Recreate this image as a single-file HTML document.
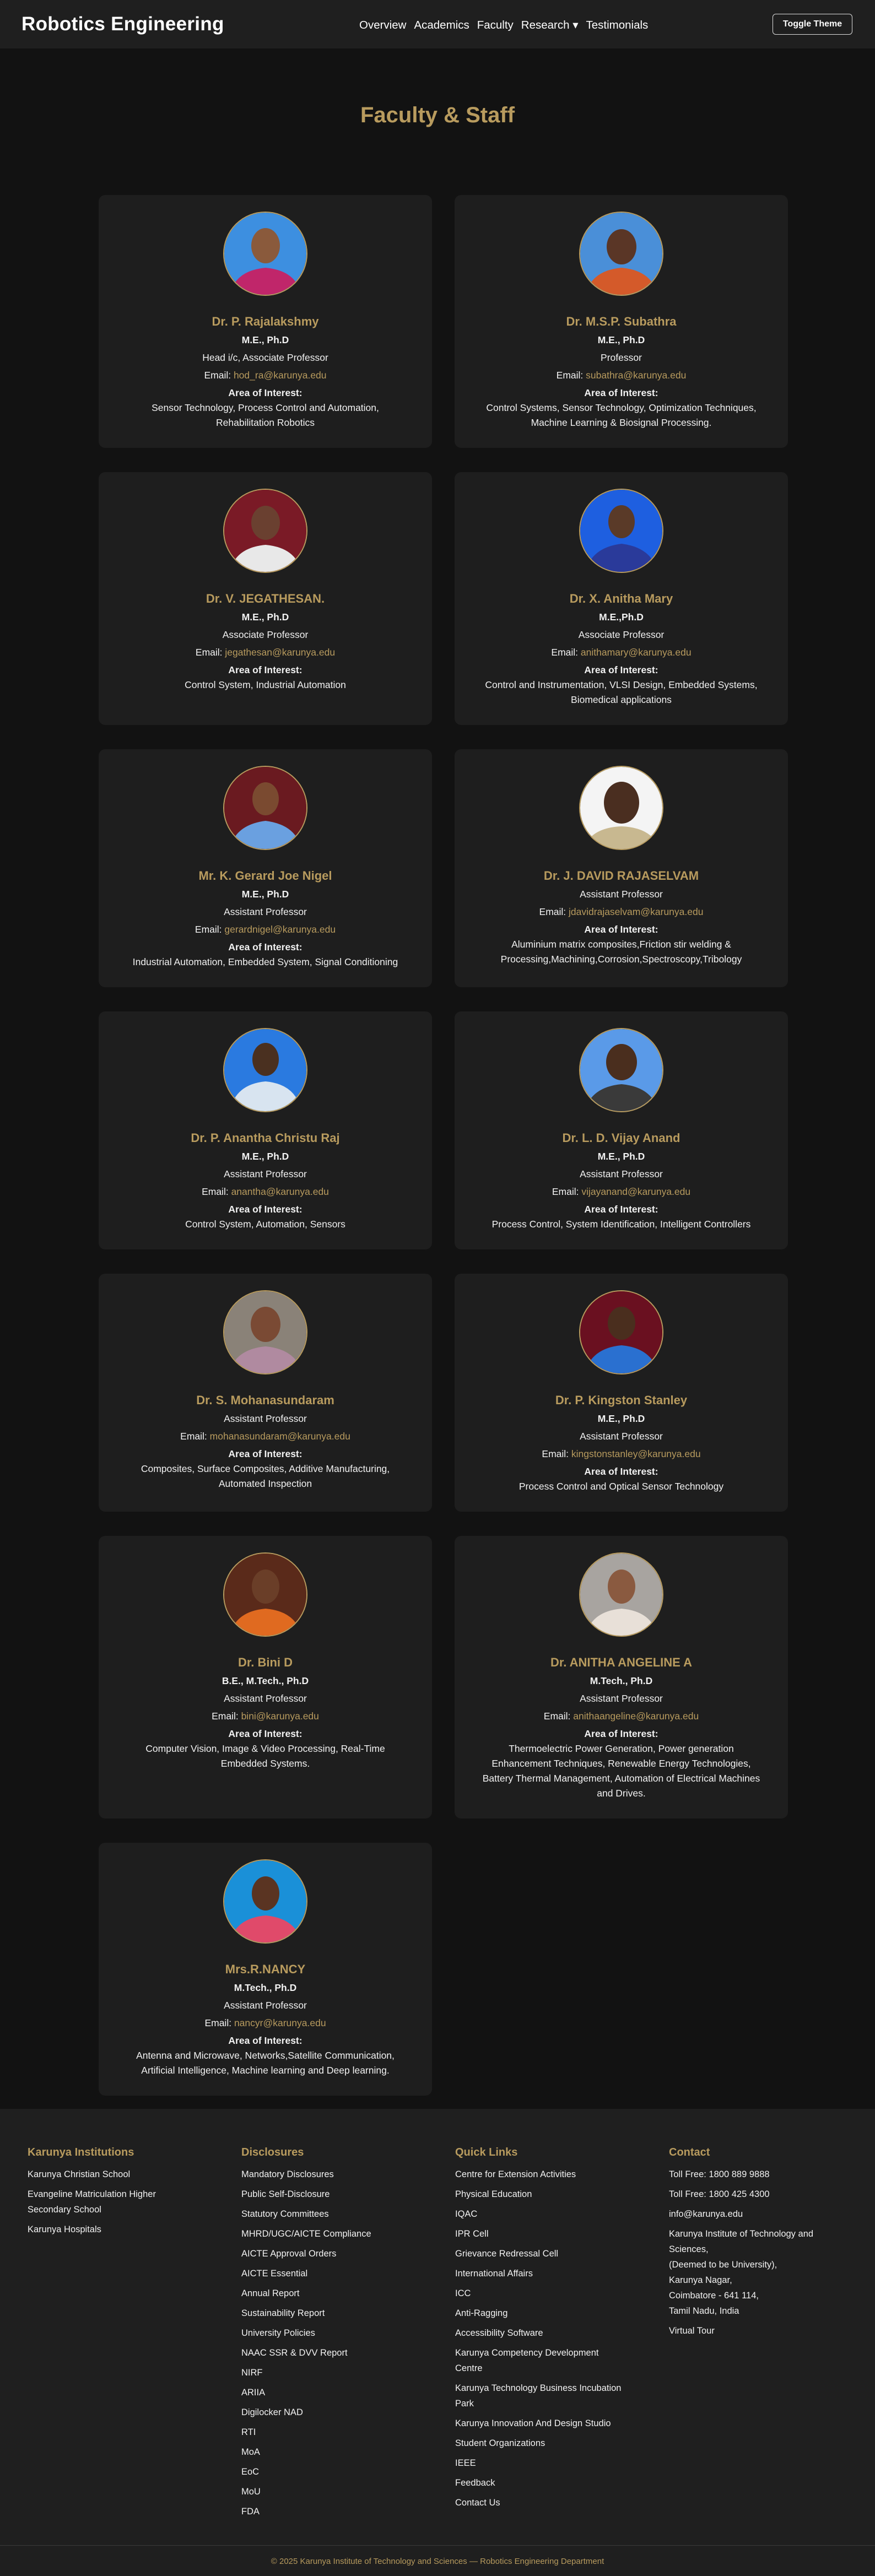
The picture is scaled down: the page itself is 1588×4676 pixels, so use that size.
<!DOCTYPE html>
<html><head><meta charset="utf-8"><style>
*{box-sizing:border-box;margin:0;padding:0}
body{width:1588px;height:4676px;background:#121212;font-family:"Liberation Sans",sans-serif;color:#f2f2f2;overflow:hidden;position:relative}
header{height:88px;background:#1f1f1f;position:relative}
.logo{position:absolute;left:39px;top:24px;font-size:35px;font-weight:bold;color:#fff;letter-spacing:0.3px}
nav{position:absolute;left:652px;top:33px;font-size:20.5px;color:#fff;white-space:nowrap}
nav span{margin-right:14px}
.tt{position:absolute;left:1402px;top:25px;width:145px;height:38px;border:1.5px solid #ddd;border-radius:6px;font-size:16px;font-weight:bold;color:#fff;text-align:center;line-height:35px}
h1{position:absolute;top:185px;left:0;width:100%;text-align:center;font-size:40px;line-height:48px;color:#b89b5e}
.grid{position:absolute;left:179px;top:354px;width:1251px;display:grid;grid-template-columns:605px 605px;column-gap:41px;row-gap:44px}
.card{background:#1e1e1e;border-radius:12px;padding:30px 14px 32px;text-align:center;font-size:17.5px}
.ph{width:153px;height:153px;border-radius:50%;border:2px solid #b89b5e;margin:0 auto;overflow:hidden}
.ph svg{display:block}
.nm{margin-top:34px;font-size:22px;font-weight:bold;line-height:26px;color:#b89b5e}
.dg{margin-top:8px;font-weight:bold;line-height:24px}
.p{margin-top:8px;line-height:24px}
.em a{color:#b89b5e;text-decoration:none}
.ai{margin-top:8px;font-weight:bold;line-height:24px}
.it{margin-top:2px;line-height:27px}
footer{position:absolute;left:0;top:3828px;width:1588px;height:848px;background:#1f1f1f}
.cols{position:absolute;top:66px;left:50px;display:flex}
.col{width:388px;padding-right:48px}
.col h3{font-size:20px;line-height:26px;color:#b89b5e;margin-bottom:13px}
.col div{font-size:16.5px;line-height:28px;margin-bottom:8px;color:#f2f2f2}
.bar{position:absolute;left:0;top:792px;width:100%;border-top:1.5px solid #3a3a3a;text-align:center;font-size:15px;color:#b89b5e;padding-top:20px}
</style></head><body>
<header>
<div class="logo">Robotics Engineering</div>
<nav><span>Overview</span><span>Academics</span><span>Faculty</span><span>Research ▾</span><span>Testimonials</span></nav>
<div class="tt">Toggle Theme</div>
</header>
<h1>Faculty &amp; Staff</h1>
<div class="grid">

<div class="card"><div class="ph"><svg width="149" height="149"><rect width="149" height="149" fill="#3d8fe0"/><ellipse cx="75" cy="60" rx="26" ry="32" fill="#8a5a3c"/><path d="M10 149 Q20 105 75 100 Q130 105 140 149Z" fill="#c0266a"/></svg></div>
<div class="nm">Dr. P. Rajalakshmy</div><div class="dg">M.E., Ph.D</div><div class="p">Head i/c, Associate Professor</div><div class="p em">Email: <a>hod_ra@karunya.edu</a></div><div class="ai">Area of Interest:</div><div class="it">Sensor Technology, Process Control and Automation,<br>Rehabilitation Robotics</div></div>

<div class="card"><div class="ph"><svg width="149" height="149"><rect width="149" height="149" fill="#4a8fd8"/><ellipse cx="75" cy="62" rx="27" ry="32" fill="#5a3626"/><path d="M10 149 Q20 105 75 100 Q130 105 140 149Z" fill="#d45a2a"/></svg></div>
<div class="nm">Dr. M.S.P. Subathra</div><div class="dg">M.E., Ph.D</div><div class="p">Professor</div><div class="p em">Email: <a>subathra@karunya.edu</a></div><div class="ai">Area of Interest:</div><div class="it">Control Systems, Sensor Technology, Optimization Techniques,<br>Machine Learning &amp; Biosignal Processing.</div></div>

<div class="card"><div class="ph"><svg width="149" height="149"><rect width="149" height="149" fill="#7a1a26"/><ellipse cx="75" cy="60" rx="26" ry="31" fill="#6a4030"/><path d="M10 149 Q20 105 75 100 Q130 105 140 149Z" fill="#e8e8e8"/></svg></div>
<div class="nm">Dr. V. JEGATHESAN.</div><div class="dg">M.E., Ph.D</div><div class="p">Associate Professor</div><div class="p em">Email: <a>jegathesan@karunya.edu</a></div><div class="ai">Area of Interest:</div><div class="it">Control System, Industrial Automation</div></div>

<div class="card"><div class="ph"><svg width="149" height="149"><rect width="149" height="149" fill="#1e5fe0"/><ellipse cx="75" cy="58" rx="24" ry="30" fill="#5a3a28"/><path d="M10 149 Q20 105 75 98 Q130 105 140 149Z" fill="#2a3a9a"/></svg></div>
<div class="nm">Dr. X. Anitha Mary</div><div class="dg">M.E.,Ph.D</div><div class="p">Associate Professor</div><div class="p em">Email: <a>anithamary@karunya.edu</a></div><div class="ai">Area of Interest:</div><div class="it">Control and Instrumentation, VLSI Design, Embedded Systems,<br>Biomedical applications</div></div>

<div class="card"><div class="ph"><svg width="149" height="149"><rect width="149" height="149" fill="#6a1a20"/><ellipse cx="75" cy="58" rx="24" ry="30" fill="#7a4a30"/><path d="M10 149 Q20 105 75 98 Q130 105 140 149Z" fill="#6aa0e0"/></svg></div>
<div class="nm">Mr. K. Gerard Joe Nigel</div><div class="dg">M.E., Ph.D</div><div class="p">Assistant Professor</div><div class="p em">Email: <a>gerardnigel@karunya.edu</a></div><div class="ai">Area of Interest:</div><div class="it">Industrial Automation, Embedded System, Signal Conditioning</div></div>

<div class="card"><div class="ph"><svg width="149" height="149"><rect width="149" height="149" fill="#f4f4f4"/><ellipse cx="75" cy="65" rx="32" ry="38" fill="#4a2e20"/><path d="M5 149 Q20 110 75 108 Q130 110 144 149Z" fill="#c8b890"/></svg></div>
<div class="nm">Dr. J. DAVID RAJASELVAM</div><div class="p">Assistant Professor</div><div class="p em">Email: <a>jdavidrajaselvam@karunya.edu</a></div><div class="ai">Area of Interest:</div><div class="it">Aluminium matrix composites,Friction stir welding &amp;<br>Processing,Machining,Corrosion,Spectroscopy,Tribology</div></div>

<div class="card"><div class="ph"><svg width="149" height="149"><rect width="149" height="149" fill="#2a7ae0"/><ellipse cx="75" cy="55" rx="24" ry="30" fill="#4a3020"/><path d="M10 149 Q20 100 75 95 Q130 100 140 149Z" fill="#d8e4f0"/></svg></div>
<div class="nm">Dr. P. Anantha Christu Raj</div><div class="dg">M.E., Ph.D</div><div class="p">Assistant Professor</div><div class="p em">Email: <a>anantha@karunya.edu</a></div><div class="ai">Area of Interest:</div><div class="it">Control System, Automation, Sensors</div></div>

<div class="card"><div class="ph"><svg width="149" height="149"><rect width="149" height="149" fill="#5a9ae8"/><ellipse cx="75" cy="60" rx="28" ry="33" fill="#4a2e1e"/><path d="M8 149 Q20 105 75 100 Q130 105 142 149Z" fill="#3a3a3a"/></svg></div>
<div class="nm">Dr. L. D. Vijay Anand</div><div class="dg">M.E., Ph.D</div><div class="p">Assistant Professor</div><div class="p em">Email: <a>vijayanand@karunya.edu</a></div><div class="ai">Area of Interest:</div><div class="it">Process Control, System Identification, Intelligent Controllers</div></div>

<div class="card"><div class="ph"><svg width="149" height="149"><rect width="149" height="149" fill="#8a8278"/><ellipse cx="75" cy="60" rx="27" ry="32" fill="#7a4a34"/><path d="M8 149 Q20 105 75 100 Q130 105 142 149Z" fill="#b08aa0"/></svg></div>
<div class="nm">Dr. S. Mohanasundaram</div><div class="p">Assistant Professor</div><div class="p em">Email: <a>mohanasundaram@karunya.edu</a></div><div class="ai">Area of Interest:</div><div class="it">Composites, Surface Composites, Additive Manufacturing,<br>Automated Inspection</div></div>

<div class="card"><div class="ph"><svg width="149" height="149"><rect width="149" height="149" fill="#6a1020"/><ellipse cx="75" cy="58" rx="25" ry="30" fill="#4a2e1e"/><path d="M8 149 Q20 103 75 98 Q130 103 142 149Z" fill="#2a70d0"/></svg></div>
<div class="nm">Dr. P. Kingston Stanley</div><div class="dg">M.E., Ph.D</div><div class="p">Assistant Professor</div><div class="p em">Email: <a>kingstonstanley@karunya.edu</a></div><div class="ai">Area of Interest:</div><div class="it">Process Control and Optical Sensor Technology</div></div>

<div class="card"><div class="ph"><svg width="149" height="149"><rect width="149" height="149" fill="#5a2a1a"/><ellipse cx="75" cy="60" rx="25" ry="31" fill="#6a3e28"/><path d="M10 149 Q20 105 75 100 Q130 105 140 149Z" fill="#e06a20"/></svg></div>
<div class="nm">Dr. Bini D</div><div class="dg">B.E., M.Tech., Ph.D</div><div class="p">Assistant Professor</div><div class="p em">Email: <a>bini@karunya.edu</a></div><div class="ai">Area of Interest:</div><div class="it">Computer Vision, Image &amp; Video Processing, Real-Time<br>Embedded Systems.</div></div>

<div class="card"><div class="ph"><svg width="149" height="149"><rect width="149" height="149" fill="#a8a4a0"/><ellipse cx="75" cy="60" rx="25" ry="31" fill="#8a5a40"/><path d="M10 149 Q20 105 75 100 Q130 105 140 149Z" fill="#e8e0d8"/></svg></div>
<div class="nm">Dr. ANITHA ANGELINE A</div><div class="dg">M.Tech., Ph.D</div><div class="p">Assistant Professor</div><div class="p em">Email: <a>anithaangeline@karunya.edu</a></div><div class="ai">Area of Interest:</div><div class="it">Thermoelectric Power Generation, Power generation<br>Enhancement Techniques, Renewable Energy Technologies,<br>Battery Thermal Management, Automation of Electrical Machines<br>and Drives.</div></div>

<div class="card"><div class="ph"><svg width="149" height="149"><rect width="149" height="149" fill="#1a90d8"/><ellipse cx="75" cy="60" rx="25" ry="31" fill="#5a3422"/><path d="M10 149 Q20 105 75 100 Q130 105 140 149Z" fill="#e04a6a"/></svg></div>
<div class="nm">Mrs.R.NANCY</div><div class="dg">M.Tech., Ph.D</div><div class="p">Assistant Professor</div><div class="p em">Email: <a>nancyr@karunya.edu</a></div><div class="ai">Area of Interest:</div><div class="it">Antenna and Microwave, Networks,Satellite Communication,<br>Artificial Intelligence, Machine learning and Deep learning.</div></div>

</div>
<footer>
<div class="cols">
<div class="col"><h3>Karunya Institutions</h3><div>Karunya Christian School</div><div>Evangeline Matriculation Higher<br>Secondary School</div><div>Karunya Hospitals</div></div>
<div class="col"><h3>Disclosures</h3><div>Mandatory Disclosures</div><div>Public Self-Disclosure</div><div>Statutory Committees</div><div>MHRD/UGC/AICTE Compliance</div><div>AICTE Approval Orders</div><div>AICTE Essential</div><div>Annual Report</div><div>Sustainability Report</div><div>University Policies</div><div>NAAC SSR &amp; DVV Report</div><div>NIRF</div><div>ARIIA</div><div>Digilocker NAD</div><div>RTI</div><div>MoA</div><div>EoC</div><div>MoU</div><div>FDA</div></div>
<div class="col"><h3>Quick Links</h3><div>Centre for Extension Activities</div><div>Physical Education</div><div>IQAC</div><div>IPR Cell</div><div>Grievance Redressal Cell</div><div>International Affairs</div><div>ICC</div><div>Anti-Ragging</div><div>Accessibility Software</div><div>Karunya Competency Development<br>Centre</div><div>Karunya Technology Business Incubation<br>Park</div><div>Karunya Innovation And Design Studio</div><div>Student Organizations</div><div>IEEE</div><div>Feedback</div><div>Contact Us</div></div>
<div class="col"><h3>Contact</h3><div>Toll Free: 1800 889 9888</div><div>Toll Free: 1800 425 4300</div><div>info@karunya.edu</div><div>Karunya Institute of Technology and<br>Sciences,<br>(Deemed to be University),<br>Karunya Nagar,<br>Coimbatore - 641 114,<br>Tamil Nadu, India</div><div>Virtual Tour</div></div>
</div>
<div class="bar">© 2025 Karunya Institute of Technology and Sciences — Robotics Engineering Department</div>
</footer>
</body></html>
